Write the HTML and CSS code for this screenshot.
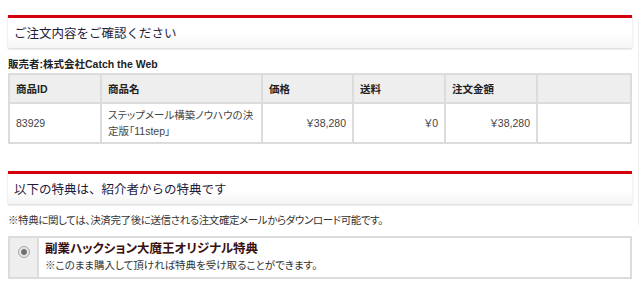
FILE: index.html
```html
<!DOCTYPE html>
<html>
<head>
    <title>ご注文内容の確認</title>
    <link rel="stylesheet" href="styles.css">
</head>
<body>
    <div class="page">
        <div class="main">
            <h2 class="sectionTitle">ご注文内容をご確認ください</h2>
            <p class="seller">販売者:株式会社Catch the Web</p>
            <table class="orderTable">
                <tr>
                    <th class="colId">商品ID</th>
                    <th class="colName">商品名</th>
                    <th class="colPrice">価格</th>
                    <th class="colShip">送料</th>
                    <th class="colTotal">注文金額</th>
                    <th class="colBlank"></th>
                </tr>
                <tr>
                    <td>83929</td>
                    <td>ステップメール構築ノウハウの決定版「11step」</td>
                    <td class="num">￥38,280</td>
                    <td class="num">￥0</td>
                    <td class="num">￥38,280</td>
                    <td></td>
                </tr>
            </table>

            <h2 class="sectionTitle second">以下の特典は、紹介者からの特典です</h2>
            <p class="note">※特典に関しては、決済完了後に送信される注文確定メールからダウンロード可能です。</p>

            <div class="bonus">
                <div class="bonusRadio"><span class="radio"></span></div>
                <div class="bonusBody">
                    <div class="bonusTitle">副業ハックション大魔王オリジナル特典</div>
                    <div class="bonusText">※このまま購入して頂ければ特典を受け取ることができます。</div>
                </div>
            </div>
        </div>
        <div class="edge"></div>
    </div>
</body>
</html>
```

FILE: styles.css
```css
body, html {
    margin: 0;
    padding: 0;
    background-color: #fff;
    color: #333;
    font-family: "Liberation Sans", "Noto Sans CJK JP", sans-serif;
    font-feature-settings: "palt";
}
.page {
    display: flex;
    padding: 15px 0 0 8px;
}
.main {
    width: 624px;
}
.edge {
    width: 1px;
    height: 205px;
    margin: 5px 0 0 6px;
    background-color: #ececec;
}
.sectionTitle {
    margin: 0;
    height: 30px;
    line-height: 30px;
    padding: 0 6px;
    border-top: 3px solid #d4000b;
    background: linear-gradient(#fff 55%, #f4f4f4);
    box-shadow: 0 1px 2px rgba(0, 0, 0, 0.18);
    font-size: 12.5px;
    font-weight: normal;
    color: #1e1c3c;
    font-family: "Noto Sans CJK JP", sans-serif;
    font-feature-settings: normal;
}
.sectionTitle.second {
    margin-top: 27px;
}
.seller {
    margin: 9px 0 2px;
    font-size: 10.5px;
    line-height: 14px;
    font-weight: bold;
    color: #222;
}
.orderTable {
    width: 624px;
    border-collapse: collapse;
    border: 2px solid #dcdcdc;
    font-size: 10.5px;
}
.orderTable th, .orderTable td {
    border: 2px solid #dcdcdc;
    padding: 0 6px;
    text-align: left;
    vertical-align: middle;
}
.orderTable th {
    height: 27px;
    background-color: #eee;
    font-weight: bold;
    color: #222;
}
.orderTable td {
    height: 38px;
    line-height: 16px;
    color: #444;
}
.orderTable td.num {
    text-align: right;
}
.colId { width: 78px; }
.colName { width: 147px; }
.colPrice { width: 77px; }
.colShip { width: 78px; }
.colTotal { width: 78px; }
.note {
    margin: 8px 0 8px;
    font-size: 10.5px;
    line-height: 16px;
    letter-spacing: -0.4px;
    color: #333;
}
.bonus {
    display: flex;
    border: 2px solid #dcdcdc;
    height: 39px;
}
.bonusRadio {
    width: 29px;
    background-color: #eee;
    border-right: 2px solid #dcdcdc;
    display: flex;
    justify-content: center;
    padding-top: 8px;
    box-sizing: border-box;
}
.radio {
    width: 10px;
    height: 10px;
    border-radius: 50%;
    border: 1px solid #aaa;
    background: radial-gradient(circle, #666 0, #777 2.5px, #e4e4e4 3.5px);
}
.bonusBody {
    padding: 3px 6px;
}
.bonusTitle {
    font-size: 12.5px;
    line-height: 17px;
    font-weight: bold;
    color: #3a1010;
}
.bonusText {
    font-size: 10.5px;
    line-height: 14px;
    color: #333;
}
```
